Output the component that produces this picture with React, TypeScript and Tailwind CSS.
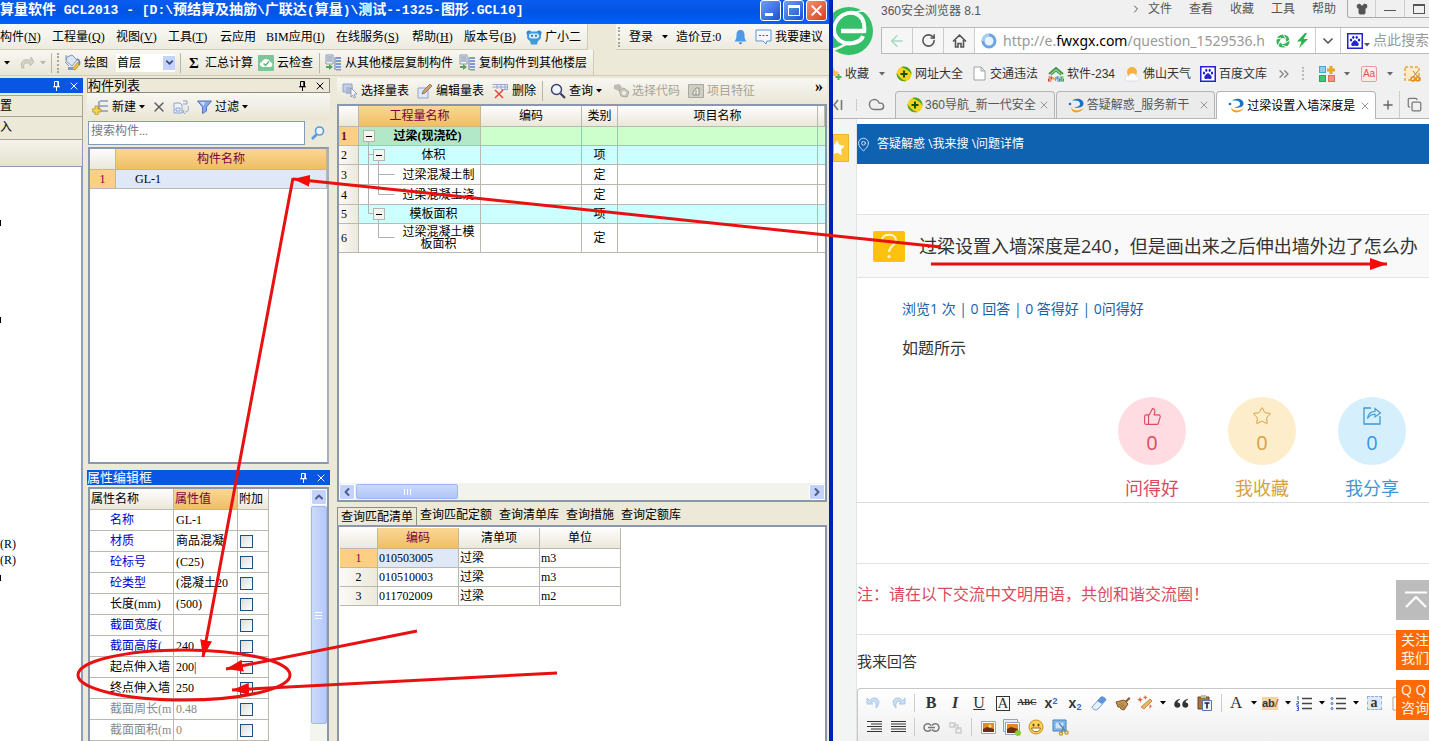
import React from "react";
import { ArrowLeft, ChevronDown, ChevronLeft, ChevronRight, ChevronsRight, ChevronUp, Cloud, Copy, Home, MapPin, Plus, RotateCw, Shirt, Star, ThumbsUp, X } from "lucide-react";

type IconProps = { className?: string };

const Caret = ({ className = "text-black" }: IconProps) => (
  <svg width="6" height="4" viewBox="0 0 6 4" className={`shrink-0 ${className}`}>
    <path d="M0 0h6L3 3.5z" fill="currentColor" />
  </svg>
);

const Pin = () => (
  <svg width="9" height="10" viewBox="0 0 9 10">
    <path d="M2.5 0.5h4v5h-4z M1 5.8h7 M4.5 6v4 M5.8 1v4.5" fill="none" stroke="currentColor" />
  </svg>
);

const BucketIcon = () => (
  <svg width="17" height="17" viewBox="0 0 17 17">
    <path d="M3 3l5-2 5 5-5 6-6-5z" fill="#dbe5f3" stroke="#7f97b8" />
    <path d="M2 1v5M1 8l4 4" stroke="#7f97b8" fill="none" />
    <path d="M8 15l6-7 2 2-5 6z" fill="#f0c33c" stroke="#a98016" strokeWidth=".7" />
    <path d="M13 5c3 1 3 4 2 6" stroke="#5d7fc0" strokeWidth="1.6" fill="none" />
    <path d="M4 13h5v3H4z" fill="#8398c6" />
  </svg>
);

const CloudCheckIcon = () => (
  <svg width="16" height="16" viewBox="0 0 16 16">
    <rect width="16" height="16" rx="1" fill="#7cc79a" />
    <path d="M3 11c-2-1-1-4 1-4 1-4 7-4 8 0 3 0 3 4 1 5H4z" fill="#fff" />
    <path d="M5.5 8.5l2 2 3.5-4" stroke="#5bb280" strokeWidth="1.4" fill="none" />
  </svg>
);

const FloorCopyIcon = () => (
  <svg width="17" height="17" viewBox="0 0 17 17">
    <path d="M1 1h7v9H1z" fill="#f4f6fa" stroke="#8d97a8" />
    <path d="M2 3h5M2 5h5M2 7h5" stroke="#6c7fa6" />
    <path d="M1 12h3v-2l4 3-4 3v-2H1z" fill="#54a457" />
    <path d="M11 3h5v2h-5zM11 6h5v2h-5zM11 9h5v2h-5zM11 12h5v2h-5zM11 15h5v1.5h-5z" fill="#7f9ad2" />
    <path d="M10 3v13" stroke="#5b77b3" />
  </svg>
);

const MascotIcon = () => (
  <svg width="16" height="16" viewBox="0 0 16 16">
    <circle cx="3" cy="4" r="2.5" fill="#2f86c9" />
    <circle cx="13" cy="4" r="2.5" fill="#2f86c9" />
    <rect x="1" y="2.500" width="14" height="10" rx="5" fill="#3f9bdc" />
    <rect x="3" y="4.500" width="10" height="5" rx="2.500" fill="#d4eefb" />
    <circle cx="6" cy="6.800" r="1" fill="#1d5f9d" />
    <circle cx="10" cy="6.800" r="1" fill="#1d5f9d" />
    <path d="M4 12h8l-1 3.500H5z" fill="#3f9bdc" />
  </svg>
);

const BellIcon = () => (
  <svg width="13" height="16" viewBox="0 0 13 16">
    <path d="M6.500 1c3 0 4 2 4 5 0 4 1 5 2 6.500H.5C1.500 11 2.500 10 2.500 6c0-3 1-5 4-5z" fill="#4d9be8" />
    <path d="M4.500 13.500h4l-2 2z" fill="#2e6fb5" />
  </svg>
);

const BubbleIcon = () => (
  <svg width="17" height="16" viewBox="0 0 17 16">
    <path d="M1 1h15v11h-4l-1 3-3-3H1z" fill="#f5f9ff" stroke="#5d95d6" />
    <path d="M4 6.500h2M7.500 6.500h2M11 6.500h2" stroke="#3465a8" strokeWidth="1.200" />
  </svg>
);

const NewIcon = () => (
  <svg width="17" height="16" viewBox="0 0 17 16">
    <path d="M8 2h8M8 7h8M8 12h8M7 2v10" stroke="#8a9ab8" strokeWidth="1.600" fill="none" />
    <path d="M3 7h3v3h3v3H6v3H3v-3H0v-3h3z" fill="#f6d64c" stroke="#a78b26" strokeWidth=".7" />
  </svg>
);

const CopyPropIcon = () => (
  <svg width="17" height="16" viewBox="0 0 17 16">
    <path d="M1 4h6l2 2v8H1z" fill="#eef2fb" stroke="#8ca0cf" />
    <path d="M3 9h4v3H3z" fill="none" stroke="#8ca0cf" />
    <path d="M10 2h4v3h-4M12 13c3 0 4-2 3-6M11 11l-1 2 2 2" stroke="#8ca0cf" fill="none" />
  </svg>
);

const FunnelIcon = () => (
  <svg width="15" height="14" viewBox="0 0 15 14">
    <path d="M.5 1h14l-5 6v4l-4 2.500V7z" fill="#86a9e6" stroke="#5278bd" />
    <path d="M3 2h5L6.500 6z" fill="#cfe0fa" />
  </svg>
);

const SearchIcon = ({ className = "text-[#3c3c66]" }: IconProps) => (
  <svg width="16" height="16" viewBox="0 0 16 16" className={className}>
    <circle cx="6.500" cy="6.500" r="5" fill="#eef6ff" stroke="currentColor" strokeWidth="1.400" />
    <path d="M10.500 10.500l4.500 4.500" stroke="currentColor" strokeWidth="2.200" />
  </svg>
);

const FindIcon = () => (
  <svg width="16" height="16" viewBox="0 0 16 16">
    <circle cx="9.500" cy="6" r="4" fill="#e9f5ff" stroke="#5a9bdc" strokeWidth="1.600" />
    <path d="M6.500 9.500L2 14" stroke="#5a9bdc" strokeWidth="2.600" />
  </svg>
);

const PickIcon = () => (
  <svg width="16" height="16" viewBox="0 0 16 16">
    <path d="M1 1h9v8H1z" fill="#c3cfe4" stroke="#93a4c6" />
    <path d="M4 4h7v7H4z" fill="#a9b9d8" />
    <path d="M9 5l6 6-3 .3 1.500 3-1.500.7-1.400-3L9 14z" fill="#fff" stroke="#7e8aa3" strokeWidth=".8" />
  </svg>
);

const EditIcon = () => (
  <svg width="16" height="16" viewBox="0 0 16 16">
    <path d="M1 5h10v10H1z" fill="#dfe9f7" stroke="#90a5c9" />
    <path d="M5 11l1-3 7-7 2 2-7 7z" fill="#c9a27a" stroke="#7d6244" strokeWidth=".7" />
  </svg>
);

const DeleteRowIcon = () => (
  <svg width="17" height="16" viewBox="0 0 17 16">
    <path d="M.5 1.500h15v5H9M.5 4h15M5 1.500V6M9 1.500V6M13 1.500V6" fill="none" stroke="#94a6ca" />
    <path d="M3 7l8 8M11 7l-8 8" stroke="#e5473e" strokeWidth="1.500" />
  </svg>
);

const GrayCodeIcon = () => (
  <svg width="16" height="16" viewBox="0 0 16 16">
    <path d="M1 2l5-1 3 3-3 4-5-2z" fill="#bdbcb2" />
    <path d="M6 7l5-2 5 4-2 5-6-1z" fill="#c9c8be" stroke="#a9a89e" />
    <circle cx="11" cy="10" r="2" fill="#f0efe9" />
  </svg>
);

const GrayFeatureIcon = () => (
  <svg width="16" height="14" viewBox="0 0 16 14">
    <path d="M.5.5h15v13H.5z" fill="#cfcec5" stroke="#a9a89e" />
    <path d="M5 11V8l3-4h3v7zM8 6v5" fill="#eceae2" stroke="#908f86" />
  </svg>
);

const Sep = ({ className = "h-5" }: IconProps) => <span className={`w-px shrink-0 bg-[#b9b6a2] ${className}`} />;

const Grip = () => <span className="h-5 w-0 shrink-0 border-l-2 border-dotted border-[#a9a693]" />;

type ToolProps = { className: string; icon?: React.ReactNode; label?: string; caret?: boolean; title?: string; disabled?: boolean };

const Tool = ({ className, icon, label, caret, title, disabled }: ToolProps) => (
  <button
    type="button"
    disabled={disabled}
    aria-label={label ?? title}
    className={`flex h-full shrink-0 items-center gap-[3px] whitespace-nowrap ${disabled ? "text-[#a6a496]" : ""} ${className}`}
  >
    {icon}
    {label}
    {caret && <Caret />}
  </button>
);

const titleParts: { text: string; wide: boolean }[] = [
  { text: "算量软件", wide: true },
  { text: " GCL2013 - [D:\\", wide: false },
  { text: "预结算及抽筋", wide: true },
  { text: "\\", wide: false },
  { text: "广联达", wide: true },
  { text: "(", wide: false },
  { text: "算量", wide: true },
  { text: ")\\", wide: false },
  { text: "测试", wide: true },
  { text: "--1325-", wide: false },
  { text: "图形", wide: true },
  { text: ".GCL10]", wide: false },
];

const TitleBar = () => (
  <header className="flex h-6 shrink-0 items-start justify-between bg-gradient-to-b from-[#0a5cf0] via-[#0054e3] to-[#0062fb] pr-[2px]">
    <h1 className="overflow-hidden whitespace-pre font-['Liberation_Mono','Noto_Sans_CJK_SC',monospace] text-[13px] leading-[21px] font-bold text-white">
      {titleParts.map((p, i) => (
        <span key={i} className={p.wide ? "text-[14px]" : "text-[13px]"}>
          {p.text}
        </span>
      ))}
    </h1>
    <div className="flex gap-[2px]">
      <button type="button" aria-label="最小化" className="flex h-[21px] w-[21px] items-end rounded-[3px] border border-white bg-gradient-to-br from-[#6f9ff5] to-[#1a4fd0] p-1">
        <span className="h-[3px] w-[8px] bg-white" />
      </button>
      <button type="button" aria-label="最大化" className="flex h-[21px] w-[21px] items-center justify-center rounded-[3px] border border-white bg-gradient-to-br from-[#6f9ff5] to-[#1a4fd0]">
        <span className="h-[11px] w-[12px] border border-t-[3px] border-white" />
      </button>
      <button type="button" aria-label="关闭" className="flex h-[21px] w-[21px] items-center justify-center rounded-[3px] border border-white bg-gradient-to-br from-[#f0906f] to-[#d43c14] text-white">
        <X size={17} strokeWidth={2.5} />
      </button>
    </div>
  </header>
);

const menus: { name: string; key?: string; width: string }[] = [
  { name: "构件", key: "N", width: "w-[52px]" },
  { name: "工程量", key: "Q", width: "w-[64px]" },
  { name: "视图", key: "V", width: "w-[52px]" },
  { name: "工具", key: "T", width: "w-[52px]" },
  { name: "云应用", width: "w-[46px]" },
  { name: "BIM应用", key: "I", width: "w-[70px]" },
  { name: "在线服务", key: "S", width: "w-[76px]" },
  { name: "帮助", key: "H", width: "w-[52px]" },
  { name: "版本号", key: "B", width: "w-[62px]" },
];

const MenuRow = () => (
  <div className="flex h-[26px] shrink-0 justify-between">
    <nav className="flex items-center border-r border-b border-[#cfccb9] bg-gradient-to-b from-[#fafaf7] to-[#edebdf] pr-[5px]">
      {menus.map((m) => (
        <button type="button" key={m.name} className={`shrink-0 text-left whitespace-nowrap ${m.width}`}>
          {m.name}
          {m.key && (
            <>
              (<u>{m.key}</u>)
            </>
          )}
        </button>
      ))}
      <Tool className="w-[56px]" icon={<MascotIcon />} label="广小二" />
    </nav>
    <div className="flex items-center border-b border-[#cfccb9] bg-gradient-to-b from-[#fafaf7] to-[#edebdf] pr-[6px] pl-[2px]">
      <Grip />
      <Tool className="w-[56px] justify-between pr-2 pl-[9px]" label="登录" caret />
      <span className="w-[58px] whitespace-nowrap">造价豆:0</span>
      <Tool className="w-[21px]" icon={<BellIcon />} title="通知" />
      <Tool className="w-[68px]" icon={<BubbleIcon />} label="我要建议" />
    </div>
  </div>
);

const MainToolbar = () => (
  <div className="flex h-[26px] shrink-0 border-b border-[#cfccb9]">
    <div className="flex items-center gap-[5px] border-r border-[#cfccb9] bg-gradient-to-b from-[#f8f7f2] to-[#e9e6d6] pr-[5px] pl-1">
      <Caret />
      <svg width="16" height="14" viewBox="0 0 16 14" className="ml-1">
        <path d="M3 12C1 6 4 3 9 4h3V1l3 5-4 4V7H8C5 7 4 9 5 12z" fill="#d6d4c8" stroke="#bfbdb0" />
      </svg>
      <Caret className="text-[#b9b7aa]" />
      <Sep />
      <Grip />
      <Tool className="w-[47px]" icon={<BucketIcon />} label="绘图" />
      <div className="relative w-[59px]">
        <select aria-label="楼层" className="h-[18px] w-full appearance-none bg-white pl-px leading-[18px]">
          <option>首层</option>
        </select>
        <span className="pointer-events-none absolute top-[2px] right-0 flex h-[14px] w-[12px] items-center justify-center bg-[#c3d3fd] text-[#3d5078]">
          <ChevronDown size={11} strokeWidth={4} />
        </span>
      </div>
      <Sep />
      <Tool className="w-[67px]" icon={<span className="w-[16px] text-center text-[15px] font-bold">Σ</span>} label="汇总计算" />
      <Tool className="w-[56px]" icon={<CloudCheckIcon />} label="云检查" />
      <Sep />
      <Tool className="w-[129px]" icon={<FloorCopyIcon />} label="从其他楼层复制构件" />
      <Tool className="w-[129px]" icon={<FloorCopyIcon />} label="复制构件到其他楼层" />
    </div>
  </div>
);

const PanelHeader = ({ title, active }: { title: string; active?: boolean }) => (
  <div className={`flex h-[15px] shrink-0 items-center justify-between pr-[3px] text-[13px] leading-[13px] ${active ? "bg-[#0a55e3] text-white" : "border border-[#8e8c7e] bg-[#ece9d8]"}`}>
    <h2>{title}</h2>
    <div className="flex items-center gap-[7px]">
      <button type="button" aria-label="固定">
        <Pin />
      </button>
      <button type="button" aria-label="关闭">
        <X size={12} strokeWidth={2} />
      </button>
    </div>
  </div>
);

const NavPanel = () => (
  <section className="flex w-[83px] shrink-0 flex-col">
    <PanelHeader title="" active />
    <div className="mt-[2px] h-[22px] border-t border-r border-b border-[#a9a793] leading-[20px]">置</div>
    <div className="h-[23px] border-r border-b border-[#a9a793] leading-[20px]">入</div>
    <div className="h-[27px] border-r border-b border-[#8e9ab5] bg-gradient-to-b from-[#f5f3ec] to-[#e4e1cf]" />
    <div className="flex grow flex-col border-r-2 border-[#8ba0c4] bg-white pt-[53px]">
      <span className="h-[6px] w-px bg-black" />
      <span className="mt-[91px] h-[6px] w-px bg-black" />
      <span className="mt-[213px] leading-4">(R)</span>
      <span className="leading-4">(R)</span>
      <span className="mt-[7px] h-[6px] w-px bg-black" />
    </div>
  </section>
);

const numHead = "border-r border-b border-[#b9b9b0] bg-gradient-to-b from-[#fdfdfb] to-[#ebe8da] font-normal";
const hotHead = "border-r border-b border-[#c9b78a] bg-gradient-to-b from-[#fbd794] to-[#f0be62] font-normal text-[#7a0042]";
const rowNum = "border-r border-b border-[#b9b9b0] bg-gradient-to-r from-[#fbfaf6] to-[#ece9dc] font-normal";
const hotNum = "border-r border-b border-[#b9b9b0] bg-[#fdcf85] text-[#7a0042]";
const cell = "border-r border-b border-[#b9b9b0]";

const ComponentList = () => (
  <section className="flex h-[386px] shrink-0 flex-col">
    <PanelHeader title="构件列表" />
    <div className="flex h-[27px] shrink-0 items-center bg-gradient-to-b from-[#f8f7f2] to-[#e9e6d6] pl-[5px]">
      <Tool className="w-[59px]" icon={<NewIcon />} label="新建" caret />
      <Tool className="w-[22px]" icon={<X size={16} strokeWidth={2} className="text-[#5c5c5c]" />} title="删除" />
      <Tool className="w-[24px]" icon={<CopyPropIcon />} title="复制" />
      <Tool className="w-[60px]" icon={<FunnelIcon />} label="过滤" caret />
    </div>
    <div className="flex h-[26px] shrink-0 items-start pt-px pl-px">
      <input aria-label="搜索构件" placeholder="搜索构件..." className="h-[24px] min-w-0 grow border border-[#7f9db9] bg-white px-[2px] pb-[4px] text-[12px] placeholder:text-[#777]" />
      <button type="button" aria-label="搜索" className="flex h-[24px] w-[25px] items-center justify-center">
        <FindIcon />
      </button>
    </div>
    <div className="mx-px mt-px grow border-2 border-[#8a97ad] border-r-[#a7b0c0] bg-white">
      <table className="w-full table-fixed border-separate border-spacing-0 leading-[14px]">
        <colgroup>
          <col className="w-[26px]" />
          <col />
        </colgroup>
        <thead>
          <tr className="h-[21px]">
            <th className={numHead} />
            <th className={hotHead}>构件名称</th>
          </tr>
        </thead>
        <tbody>
          <tr className="h-[19px]">
            <td className={`text-center ${hotNum}`}>1</td>
            <td className={`bg-[#dfe8f6] pl-[19px] ${cell}`}>GL-1</td>
          </tr>
        </tbody>
      </table>
    </div>
  </section>
);

type Prop = { name: string; value: string; check: boolean; tone: string };
const blue = "text-[#0000d0]";
const gray = "text-[#8a8a8a]";
const props: Prop[] = [
  { name: "名称", value: "GL-1", check: false, tone: blue },
  { name: "材质", value: "商品混凝", check: true, tone: blue },
  { name: "砼标号", value: "(C25)", check: true, tone: blue },
  { name: "砼类型", value: "(混凝土20", check: true, tone: blue },
  { name: "长度(mm)", value: "(500)", check: true, tone: "text-black" },
  { name: "截面宽度(", value: "", check: true, tone: blue },
  { name: "截面高度(", value: "240", check: true, tone: blue },
  { name: "起点伸入墙", value: "200|", check: true, tone: "text-black" },
  { name: "终点伸入墙", value: "250", check: true, tone: "text-black" },
  { name: "截面周长(m", value: "0.48", check: true, tone: gray },
  { name: "截面面积(m", value: "0", check: true, tone: gray },
];

const PropertyPanel = () => (
  <section className="mt-[6px] flex min-h-0 grow flex-col">
    <PanelHeader title="属性编辑框" active />
    <div className="mx-px mt-[2px] flex min-h-0 grow justify-between overflow-hidden border-x-2 border-t-2 border-[#8a97ad] bg-white">
      <table className="h-fit w-[179px] table-fixed border-separate border-spacing-0 leading-[14px]">
        <colgroup>
          <col className="w-[84px]" />
          <col className="w-[64px]" />
          <col className="w-[31px]" />
        </colgroup>
        <thead>
          <tr className="h-[21px] text-left">
            <th className={`pl-px ${numHead}`}>属性名称</th>
            <th className={`pl-px ${hotHead}`}>属性值</th>
            <th className={`pl-px whitespace-nowrap ${numHead}`}>附加</th>
          </tr>
        </thead>
        <tbody>
          {props.map((p) => (
            <tr key={p.name} className="h-[21px] whitespace-nowrap">
              <td className={`overflow-hidden pl-5 ${cell} ${p.tone}`}>{p.name}</td>
              <td className={`overflow-hidden pl-[2px] ${cell} ${p.tone === gray ? gray : ""}`}>{p.value}</td>
              <td className={`pl-[2px] ${cell}`}>
                {p.check && <input type="checkbox" aria-label={`附加 ${p.name}`} className="block size-[13px] appearance-none border border-[#1c5180] bg-gradient-to-br from-[#dcdcd7] to-white" />}
              </td>
            </tr>
          ))}
        </tbody>
      </table>
      <div className="flex w-[17px] flex-col items-center gap-px bg-[#f5f5f0]">
        <button type="button" aria-label="向上滚动" className="flex size-4 items-center justify-center rounded-[2px] border border-white bg-[#c3d3fd] text-[#4d6185]">
          <ChevronUp size={12} strokeWidth={4} />
        </button>
        <div className="flex h-[218px] w-4 flex-col items-center justify-center gap-[2px] rounded-[2px] border border-[#9eb8f0] bg-gradient-to-r from-[#cbdafd] to-[#b5c9fa]">
          <span className="h-px w-[7px] bg-white" />
          <span className="h-px w-[7px] bg-white" />
          <span className="h-px w-[7px] bg-white" />
        </div>
      </div>
    </div>
  </section>
);

type QRow = { n: number; level: number; name: string; kind: string; height: string; h: number; bg: string; last?: boolean };
const qRows: QRow[] = [
  { n: 1, level: 1, name: "过梁(现浇砼)", kind: "", height: "h-[19px]", h: 19, bg: "bg-[#ccffcc]" },
  { n: 2, level: 2, name: "体积", kind: "项", height: "h-[19px]", h: 19, bg: "bg-[#ccffff]" },
  { n: 3, level: 3, name: "过梁混凝土制", kind: "定", height: "h-[20px]", h: 20, bg: "bg-white" },
  { n: 4, level: 3, name: "过梁混凝土浇", kind: "定", height: "h-[20px]", h: 20, bg: "bg-white", last: true },
  { n: 5, level: 2, name: "模板面积", kind: "项", height: "h-[19px]", h: 19, bg: "bg-[#ccffff]", last: true },
  { n: 6, level: 3, name: "过梁混凝土模板面积", kind: "定", height: "h-[29px]", h: 29, bg: "bg-white", last: true },
];

const TreeMark = ({ row }: { row: QRow }) => {
  const mid = Math.floor(row.h / 2) - 1;
  const bottom = row.h - 1;
  const width = row.level === 1 ? 16 : row.level === 2 ? 28 : 38;
  const boxX = row.level === 1 ? 4.5 : 14.5;
  return (
    <svg width={width} height={bottom} className="shrink-0">
      <g stroke="#b0b0b0" fill="none">
        {row.level === 1 && <path d={`M9.500 ${mid}V${bottom}`} />}
        {row.level === 2 && <path d={`M9.500 0V${row.last ? mid + 0.5 : bottom}M9.500 ${mid + 0.5}h5M19.500 ${mid}V${bottom}`} />}
        {row.level === 3 && <path d={`M19.500 0V${row.last ? mid + 0.5 : bottom}M19.500 ${mid + 0.5}h16`} />}
        {row.level === 3 && row.n < 5 && <path d={`M9.500 0V${bottom}`} />}
      </g>
      {row.level < 3 && (
        <>
          <rect x={boxX} y={mid - 4.5} width="11" height="11" fill="#f6f4ee" stroke="#b5b5ad" />
          <path d={`M${boxX + 2.5} ${mid + 1.5}h6`} stroke="#000" />
        </>
      )}
    </svg>
  );
};

const QuantityTable = () => (
  <div className="flex h-[398px] shrink-0 flex-col border-2 border-[#8a97ad] bg-white">
    <table className="w-full table-fixed border-separate border-spacing-0 leading-[12px]">
      <colgroup>
        <col className="w-[20px]" />
        <col className="w-[122px]" />
        <col className="w-[101px]" />
        <col className="w-[36px]" />
        <col />
        <col className="w-[7px]" />
      </colgroup>
      <thead>
        <tr className="h-[21px]">
          <th className={numHead} />
          <th className={hotHead}>工程量名称</th>
          <th className={numHead}>编码</th>
          <th className={numHead}>类别</th>
          <th className={numHead}>项目名称</th>
          <th className={numHead} />
        </tr>
      </thead>
      <tbody>
        {qRows.map((r) => (
          <tr key={r.n} className={`${r.height} ${r.bg}`}>
            <td className={`pl-[2px] ${r.n === 1 ? `font-bold ${hotNum}` : rowNum}`}>{r.n}</td>
            <td className={`${cell} ${r.n === 1 ? "bg-[#b2e8c8] font-bold" : ""}`}>
              <div className="flex items-center overflow-hidden">
                <TreeMark row={r} />
                <span className="grow px-[4px] text-center">{r.name}</span>
              </div>
            </td>
            <td className={cell} />
            <td className={`text-center ${cell}`}>{r.kind}</td>
            <td className={cell} />
            <td className="border-b border-[#b9b9b0]" />
          </tr>
        ))}
      </tbody>
    </table>
    <div className="mt-auto flex h-[17px] shrink-0 items-center bg-[#f3f3ee]">
      <button type="button" aria-label="向左滚动" className="flex size-4 items-center justify-center rounded-[2px] border border-white bg-[#c3d3fd] text-[#4d6185]">
        <ChevronLeft size={12} strokeWidth={4} />
      </button>
      <div className="ml-px flex h-[15px] w-[102px] items-center justify-center gap-[2px] rounded-[2px] border border-[#9eb8f0] bg-gradient-to-b from-[#cbdafd] to-[#b0c6fa]">
        <span className="h-[6px] w-px bg-white" />
        <span className="h-[6px] w-px bg-white" />
        <span className="h-[6px] w-px bg-white" />
      </div>
      <button type="button" aria-label="向右滚动" className="ml-auto flex size-4 items-center justify-center rounded-[2px] border border-white bg-[#c3d3fd] text-[#4d6185]">
        <ChevronRight size={12} strokeWidth={4} />
      </button>
    </div>
  </div>
);

const matches = [
  ["010503005", "过梁", "m3"],
  ["010510003", "过梁", "m3"],
  ["011702009", "过梁", "m2"],
];

const QuantityArea = () => (
  <section className="flex min-w-0 grow flex-col">
    <div className="flex h-[26px] shrink-0 items-center bg-gradient-to-b from-[#f8f7f2] to-[#e9e6d6] pl-[5px]">
      <Tool className="w-[75px]" icon={<PickIcon />} label="选择量表" />
      <Tool className="w-[75px]" icon={<EditIcon />} label="编辑量表" />
      <Tool className="w-[50px]" icon={<DeleteRowIcon />} label="删除" />
      <Sep />
      <Tool className="w-[70px] pl-[7px]" icon={<SearchIcon />} label="查询" caret />
      <Tool className="w-[75px]" icon={<GrayCodeIcon />} label="选择代码" disabled />
      <Tool className="w-[75px]" icon={<GrayFeatureIcon />} label="项目特征" disabled />
      <button type="button" aria-label="更多" className="mr-1 ml-auto pb-2 text-[16px] leading-4 font-bold">
        »
      </button>
    </div>
    <QuantityTable />
    <div className="flex h-[25px] shrink-0 items-end gap-[7px] border-b-2 border-[#8a97ad] whitespace-nowrap">
      <button type="button" className="-mr-[4px] h-[18px] border border-b-0 border-[#8e8c7e] px-[3px] leading-[18px]">
        查询匹配清单
      </button>
      {["查询匹配定额", "查询清单库", "查询措施", "查询定额库"].map((t) => (
        <button type="button" key={t} className="h-[20px] leading-[18px]">
          {t}
        </button>
      ))}
    </div>
    <div className="min-h-0 grow border-x-2 border-[#8a97ad] bg-white pt-px pl-px">
      <table className="w-[281px] table-fixed border-separate border-spacing-0 leading-[14px]">
        <colgroup>
          <col className="w-[38px]" />
          <col className="w-[81px]" />
          <col className="w-[81px]" />
          <col className="w-[81px]" />
        </colgroup>
        <thead>
          <tr className="h-[21px]">
            <th className={numHead} />
            <th className={hotHead}>编码</th>
            <th className={numHead}>清单项</th>
            <th className={numHead}>单位</th>
          </tr>
        </thead>
        <tbody>
          {matches.map((m, i) => (
            <tr key={m[0]} className="h-[19px]">
              <td className={`text-center ${i === 0 ? hotNum : rowNum}`}>{i + 1}</td>
              <td className={`pl-px ${cell} ${i === 0 ? "bg-[#dfe8f6]" : ""}`}>{m[0]}</td>
              <td className={`pl-px ${cell}`}>{m[1]}</td>
              <td className={`pl-px ${cell}`}>{m[2]}</td>
            </tr>
          ))}
        </tbody>
      </table>
    </div>
  </section>
);

const DesktopApp = () => (
  <div className="flex min-w-0 flex-col overflow-hidden border-r-4 border-[#0022b4] bg-[#ece9d8] font-['Liberation_Serif','Noto_Sans_CJK_SC',serif] text-[12px] leading-[16px] text-black">
    <TitleBar />
    <MenuRow />
    <MainToolbar />
    <main className="flex min-h-0 grow pt-[2px] pr-[2px]">
      <NavPanel />
      <div className="ml-[4px] flex w-[243px] shrink-0 flex-col">
        <ComponentList />
        <PropertyPanel />
      </div>
      <div className="ml-[7px] flex min-w-0 grow">
        <QuantityArea />
      </div>
    </main>
  </div>
);

const BaiduIcon = () => (
  <svg width="16" height="16" viewBox="0 0 16 16" className="shrink-0">
    <rect x=".75" y=".75" width="14.500" height="14.500" fill="#fff" stroke="#2323d0" strokeWidth="1.500" />
    <g fill="#2323d0">
      <ellipse cx="4" cy="7" rx="1.200" ry="1.500" />
      <ellipse cx="6.300" cy="4.300" rx="1.100" ry="1.600" />
      <ellipse cx="9.700" cy="4.300" rx="1.100" ry="1.600" />
      <ellipse cx="12" cy="7" rx="1.200" ry="1.500" />
      <path d="M8 7.300c1.300 0 1.800 1.300 3 2.400 1.500 1.500.5 3.500-1.300 3.300-1.300-.3-2.100-.3-3.400 0-1.800.2-2.800-1.800-1.300-3.300C6.200 8.600 6.700 7.300 8 7.300z" />
    </g>
  </svg>
);

const NavPlusIcon = () => (
  <svg width="16" height="16" viewBox="0 0 16 16">
    <circle cx="8" cy="8" r="7.500" fill="#f8d21c" />
    <path d="M5 1C10-1 16 3 15.500 9 14 5 10 3 5 1zM.5 7c0 6 5 9 10 8C6 14 3 11 .5 7z" fill="#39a62f" />
    <path d="M8 4.500v7M4.500 8h7" stroke="#174f17" strokeWidth="2" />
  </svg>
);

const PageIcon = () => (
  <svg width="13" height="15" viewBox="0 0 13 15">
    <path d="M1 1h7l4 4v9H1zM8 1v4h4" fill="#fff" stroke="#a2a2a2" />
  </svg>
);

const HouseIcon = () => (
  <svg width="16" height="16" viewBox="0 0 16 16">
    <path d="M1 8l7-6 7 6" stroke="#3b9a41" strokeWidth="2" fill="none" />
    <path d="M3 9l5-4 5 4" stroke="#3b9a41" strokeWidth="1.200" fill="none" />
    <g fill="none" strokeWidth="1.200">
      <path d="M.5 11h3v2h-3v2h3" stroke="#d83a2e" />
      <path d="M5 11v2h2.500M7.500 11v4" stroke="#e2902a" />
      <path d="M11.500 11H9v2h2.500v2H9" stroke="#3f7bd0" />
      <path d="M15.500 11H13v4h2.500v-2H13" stroke="#39a041" />
    </g>
  </svg>
);

const WeatherIcon = () => (
  <svg width="16" height="16" viewBox="0 0 16 16">
    <circle cx="8" cy="6" r="5" fill="#fbb13c" />
    <path d="M2 15c-2-3 0-6 3-5 1-4 7-3 7 0 4 0 4 5 1 5z" fill="#fff" stroke="#cfd6dd" strokeWidth=".8" />
  </svg>
);

const SwirlIcon = () => (
  <svg width="17" height="15" viewBox="0 0 17 15">
    <path d="M4 3C8-1 16 1 15.500 6c-.5 4-6 4-9.500 3.500 3-.5 6-1 6-3.500C12 2.500 8 2 4 3z" fill="#1a73c4" />
    <path d="M3 9c2 5 9 4 13 1-3 5-12 7-13-1z" fill="#f59a23" />
    <circle cx="2" cy="6" r="1.300" fill="#1a73c4" />
  </svg>
);

const browserIcon = "flex h-full items-center justify-center";

const BrowserChrome = () => (
  <header className="shrink-0 bg-[#f0f0f0] text-[12px] text-[#333]">
    <div className="flex h-[60px]">
      <svg width="48" height="60" viewBox="0 0 48 60" className="shrink-0" aria-label="360">
        <circle cx="16" cy="31" r="24" fill="#34bf68" />
        <path d="M31 33C34 12 16 8 6 18 -6 32 6 46 20 43c6-1 9-4 10-7" fill="none" stroke="#fff" strokeWidth="4" />
        <path d="M8 31h23" stroke="#fff" strokeWidth="4.500" fill="none" />
        <path d="M8 31c1-8 14-12 17-3" stroke="#34bf68" strokeWidth="0" fill="none" />
        <path d="M-4 48C0 52 10 46 16 42" stroke="#fff" strokeWidth="2.500" fill="none" />
        <path d="M20 14c6-3 11-4 13-2" stroke="#fff" strokeWidth="2" fill="none" />
      </svg>
      <div className="flex min-w-0 grow flex-col">
        <div className="flex h-[27px] items-start text-[#555]">
          <h1 className="grow pt-[3px] text-[12px] leading-4 whitespace-nowrap">360安全浏览器 8.1</h1>
          <ChevronRight size={12} className="mt-[3px] mr-[6px]" />
          <nav className="flex gap-[17px] pr-[11px] leading-[18px] whitespace-nowrap">
            {["文件", "查看", "收藏", "工具", "帮助"].map((t) => (
              <button type="button" key={t}>
                {t}
              </button>
            ))}
          </nav>
          <div className="flex h-[18px] rounded-bl-[3px] border-b border-l border-[#aaa]">
            <button type="button" aria-label="皮肤" className={`w-[28px] border-r border-[#ccc] ${browserIcon}`}>
              <Shirt size={12} fill="#555" stroke="#555" />
            </button>
            <button type="button" aria-label="最小化" className={`w-[29px] border-r border-[#ccc] ${browserIcon}`}>
              <span className="mt-1 h-px w-3 bg-[#555]" />
            </button>
            <button type="button" aria-label="最大化" className="flex w-[24px] items-center pl-2">
              <span className="h-[10px] w-[12px] border border-t-2 border-[#555]" />
            </button>
          </div>
        </div>
        <div className="flex h-[27px] items-stretch border-y border-l border-[#b9b9b9] bg-white">
          <button type="button" aria-label="后退" className={`w-[31px] border-r border-[#ccc] bg-[#f6f6f6] text-[#a5dcc0] ${browserIcon}`}>
            <ArrowLeft size={18} />
          </button>
          <button type="button" aria-label="刷新" className={`w-[31px] border-r border-[#ccc] bg-[#f6f6f6] text-[#555] ${browserIcon}`}>
            <RotateCw size={15} strokeWidth={2.5} />
          </button>
          <button type="button" aria-label="主页" className={`w-[31px] border-r border-[#ccc] bg-[#f6f6f6] text-[#555] ${browserIcon}`}>
            <svg width="15" height="14" viewBox="0 0 15 14">
              <path d="M1 7.500L7.500 1.200 14 7.500M3.500 6v7H6V9.500h3V13h2.500V6" fill="none" stroke="currentColor" strokeWidth="1.600" />
            </svg>
          </button>
          <span className={`w-[26px] pl-px ${browserIcon}`}>
            <svg width="16" height="16" viewBox="0 0 16 16">
              <circle cx="8" cy="8" r="6" fill="#eaf4ff" stroke="#6ba7e4" strokeWidth="3" />
              <path d="M2 8a6 6 0 0 1 6-6" stroke="#a8d0f6" strokeWidth="3" fill="none" />
            </svg>
          </span>
          <div role="textbox" aria-label="地址" className="min-w-0 grow overflow-hidden pl-[2px] font-['Noto_Sans',sans-serif] text-[14px] leading-[25px] whitespace-nowrap text-[#999]">
            http://e.<span className="text-black">fwxgx.com</span>/question_1529536.h
          </div>
          <span className="flex w-[43px] shrink-0 items-center gap-[6px] pl-[4px]">
            <svg width="14" height="14" viewBox="0 0 14 14">
              <circle cx="7" cy="7" r="4.800" fill="none" stroke="#35b558" strokeWidth="3.600" />
              <path d="M7 0l3 5M14 6l-5 3M11 13l-5-2M2 12l2-5M0 5l5-1" stroke="#fff" strokeWidth="1" />
            </svg>
            <svg width="13" height="15" viewBox="0 0 13 15">
              <path d="M9 0L1 8.500h4.500L3 15l9-9H7.500L11 0z" fill="#28b34c" />
            </svg>
          </span>
          <button type="button" aria-label="地址列表" className={`w-[26px] shrink-0 border-x border-[#ccc] text-[#555] ${browserIcon}`}>
            <ChevronDown size={16} strokeWidth={2.5} />
          </button>
          <button type="button" aria-label="搜索引擎" className="flex shrink-0 items-center gap-px pl-[6px]">
            <BaiduIcon />
            <Caret className="mt-2 text-[#555]" />
          </button>
          <input aria-label="搜索" placeholder="点此搜索" className="w-[59px] shrink-0 pl-[3px] text-[14px] placeholder:text-[#999]" />
        </div>
      </div>
    </div>
    <div className="flex h-[27px] items-center whitespace-nowrap">
      <a href="#fav" className="flex w-[46px] shrink-0 items-center gap-[3px]">
        <svg width="9" height="15" viewBox="0 0 9 15">
          <path d="M0 1l2 4 4 1-3 4H0z" fill="#f5c344" />
          <path d="M5.500 8v6M2.500 11h6" stroke="#53b257" strokeWidth="2" />
        </svg>
        收藏
      </a>
      <span className="w-[17px] shrink-0">
        <Caret className="text-[#666]" />
      </span>
      <a href="#nav" className="flex w-[77px] shrink-0 items-center gap-[3px]">
        <NavPlusIcon />
        网址大全
      </a>
      <a href="#law" className="flex w-[75px] shrink-0 items-center gap-1">
        <PageIcon />
        交通违法
      </a>
      <a href="#soft" className="flex w-[76px] shrink-0 items-center gap-[3px]">
        <HouseIcon />
        软件-234
      </a>
      <a href="#weather" className="flex w-[76px] shrink-0 items-center gap-[3px]">
        <WeatherIcon />
        佛山天气
      </a>
      <a href="#wenku" className="flex w-[76px] shrink-0 items-center gap-[3px]">
        <BaiduIcon />
        百度文库
      </a>
      <button type="button" aria-label="更多书签" className="w-[24px] shrink-0 text-[#888]">
        <ChevronsRight size={16} />
      </button>
      <span className="ml-[2px] h-[13px] w-[17px] shrink-0 border-l-2 border-dotted border-[#bbb]" />
      <svg width="16" height="16" viewBox="0 0 16 16" className="shrink-0">
        <rect x=".5" y=".5" width="6" height="6" fill="#8ccdf2" stroke="#4ba3d8" />
        <path d="M12 0v8M8 4h8" stroke="#e7a521" strokeWidth="3" />
        <rect x=".5" y="9.500" width="6" height="6" fill="#48c27b" stroke="#2ba35d" />
        <rect x="9.500" y="9.500" width="6" height="6" fill="#f79180" stroke="#e46d5c" />
      </svg>
      <span className="w-[26px] shrink-0 pl-[9px]">
        <Caret className="text-[#666]" />
      </span>
      <span className="flex size-4 shrink-0 items-center justify-center rounded-[2px] border border-[#ec9b9b] bg-[#fdeaea] text-[10px] text-[#dc5454]">Aa</span>
      <span className="w-[27px] shrink-0 pl-[10px]">
        <Caret className="text-[#666]" />
      </span>
      <svg width="17" height="16" viewBox="0 0 17 16" className="shrink-0">
        <rect x="1" y="1" width="14" height="13" fill="#fdebc9" stroke="#eda43a" strokeWidth="1.500" strokeDasharray="3 2" />
        <circle cx="9" cy="13" r="2" fill="none" stroke="#e58b1e" strokeWidth="1.500" />
        <circle cx="14" cy="13" r="2" fill="none" stroke="#e58b1e" strokeWidth="1.500" />
        <path d="M9 11l5-6M14 11L9 5" stroke="#a9814b" />
      </svg>
    </div>
    <div className="flex h-[32px] items-end border-b border-[#b5b5b5] pt-1">
      <button type="button" aria-label="收起" className="mb-[7px] w-[24px] shrink-0 border-r border-[#ccc] text-[#777]">
        <svg width="10" height="12" viewBox="0 0 10 12" className="block">
          <path d="M5 1L1 6l4 5M8.500 1v10" fill="none" stroke="currentColor" strokeWidth="1.600" />
        </svg>
      </button>
      <span className="flex h-[27px] w-[38px] shrink-0 items-center justify-center text-[#777]">
        <Cloud size={17} />
      </span>
      {[
        { icon: <NavPlusIcon />, title: "360导航_新一代安全", active: false },
        { icon: <SwirlIcon />, title: "答疑解惑_服务新干", active: false },
        { icon: <SwirlIcon />, title: "过梁设置入墙深度是", active: true },
      ].map((t) => (
        <div
          key={t.title}
          className={`mr-px flex min-w-0 flex-1 items-center rounded-t-[4px] border border-b-0 border-[#b5b5b5] pr-1 pl-[11px] ${t.active ? "-mb-px h-[28px] bg-white text-black" : "h-[27px] bg-[#ebebeb] text-[#555]"}`}
        >
          <span className="shrink-0">{t.icon}</span>
          <button type="button" className="min-w-0 grow pl-[2px] text-left whitespace-nowrap">
            {t.title}
          </button>
          <button type="button" aria-label={`关闭 ${t.title}`} className="shrink-0 text-[#999]">
            <X size={12} />
          </button>
        </div>
      ))}
      <button type="button" aria-label="新标签页" className="flex h-[27px] w-[23px] shrink-0 items-center justify-center border-r border-[#ccc] text-[#666]">
        <Plus size={14} strokeWidth={2.5} />
      </button>
      <button type="button" aria-label="标签列表" className="flex h-[27px] w-[29px] shrink-0 items-center justify-center text-[#777]">
        <Copy size={15} />
      </button>
    </div>
  </header>
);

const ShareIcon = () => (
  <svg width="20" height="20" viewBox="0 0 20 20">
    <path d="M9 2H2v16h16v-8" fill="none" stroke="currentColor" strokeWidth="1.300" />
    <path d="M5.500 12.500C6 7.500 9 5.500 13 5.500V2.500l5.500 4.500-5.500 4V8.300C9.500 8.300 7.500 9.500 5.500 12.500z" fill="none" stroke="currentColor" strokeWidth="1.100" />
  </svg>
);

const Counter = ({ circle, tone, icon, label }: { circle: string; tone: string; icon: React.ReactNode; label: string }) => (
  <button type="button" className={`flex w-[68px] flex-col items-center ${tone}`}>
    <span className={`flex size-[68px] flex-col items-center rounded-full pt-[9px] ${circle}`}>
      <span className="flex h-5 items-center">{icon}</span>
      <span className="text-[20px] leading-[34px]">0</span>
    </span>
    <span className="mt-[10px] text-[18px] leading-[26px] whitespace-nowrap">{label}</span>
  </button>
);

const Arrow = ({ flip }: { flip?: boolean }) => (
  <svg width="16" height="14" viewBox="0 0 16 14" className={flip ? "-scale-x-100" : ""}>
    <path d="M1 2v6h6L5 6c3-2 6 0 5 6 5-5 3-10-2-10C6 2 5 3 3.500 4.500z" fill="#c9def3" stroke="#a9c8e8" />
  </svg>
);

const AlignLines = ({ right }: { right?: boolean }) => (
  <svg width="15" height="12" viewBox="0 0 15 12">
    <path d={right ? "M0 .5h15M4 3h11M0 5.500h15M4 8h11M0 10.500h15" : "M0 .5h15M0 3h15M0 5.500h15M0 8h15M0 10.500h15"} stroke="#333" />
  </svg>
);

const ListLines = ({ ordered }: { ordered?: boolean }) => (
  <svg width="16" height="15" viewBox="0 0 16 15">
    <path d="M6 2.500h10M6 7.500h10M6 12.500h10" stroke="#444" strokeWidth="1.300" />
    {ordered ? (
      <path d="M2 0v4M.5 5.500h2v2H.8v1.700h2M.5 10.500h2v4h-2M1 12.500h1.500" stroke="#3f62c4" fill="none" />
    ) : (
      <g fill="none" stroke="#3f62c4">
        <circle cx="2" cy="2.500" r="1" />
        <circle cx="2" cy="7.500" r="1" />
        <circle cx="2" cy="12.500" r="1" />
      </g>
    )}
  </svg>
);

const EdBtn = ({ title, children, menu }: { title: string; children: React.ReactNode; menu?: boolean }) => (
  <button type="button" aria-label={title} className={`flex h-6 shrink-0 items-center ${menu ? "w-[34px] justify-between pr-[3px] pl-[2px]" : "w-6 justify-center"}`}>
    {children}
    {menu && <Caret />}
  </button>
);

const EdSep = () => <span className="mx-1 h-[18px] w-px shrink-0 bg-[#ccc]" />;

const Editor = () => (
  <div className="grow rounded-tl-[4px] border-t border-l border-[#c4c8c8] bg-gradient-to-b from-white to-[#efefef] pt-[2px] pl-1 font-['Liberation_Serif',serif] text-[#333]">
    <div className="flex items-center">
      <EdBtn title="撤销"><Arrow /></EdBtn>
      <EdBtn title="重做"><Arrow flip /></EdBtn>
      <EdSep />
      <EdBtn title="加粗"><b className="text-[16px]">B</b></EdBtn>
      <EdBtn title="斜体"><i className="text-[16px] font-bold">I</i></EdBtn>
      <EdBtn title="下划线"><u className="text-[16px]">U</u></EdBtn>
      <EdBtn title="边框"><span className="border border-[#333] px-px text-[15px] leading-[13px]">A</span></EdBtn>
      <EdBtn title="删除线"><s className="text-[9px] font-bold">ABC</s></EdBtn>
      <EdBtn title="上标">
        <span className="font-['Liberation_Sans',sans-serif] text-[14px] leading-4 font-bold">x<sup className="text-[9px] text-[#3f62c4]">2</sup></span>
      </EdBtn>
      <EdBtn title="下标">
        <span className="font-['Liberation_Sans',sans-serif] text-[14px] leading-4 font-bold">x<sub className="text-[9px] text-[#3f62c4]">2</sub></span>
      </EdBtn>
      <EdBtn title="清除">
        <svg width="16" height="16" viewBox="0 0 16 16">
          <path d="M1 12L10 2c1-1 5 1 5 3L7 14c-2 2-6 0-6-2z" fill="#e8f1fb" stroke="#7d9ccc" />
          <path d="M6 6l4-4c1-1 5 1 5 3l-4 4z" fill="#5e94dc" />
        </svg>
      </EdBtn>
      <EdBtn title="格式刷">
        <svg width="16" height="15" viewBox="0 0 16 15">
          <path d="M1 6l8-2 4 4-4 6-3-1-1-2-2 0z" fill="#c59655" stroke="#7b5628" />
          <path d="M4 8l5 4M6 7l4 4" stroke="#8d6632" strokeWidth=".8" />
          <path d="M10 5l4-4 1.500 1.500-4 4z" fill="#8a5a28" />
        </svg>
      </EdBtn>
      <EdBtn title="自动排版" menu>
        <svg width="17" height="16" viewBox="0 0 17 16">
          <path d="M4 12l9-8 2 2-8 8z" fill="#f0b45f" stroke="#b97a2b" strokeWidth=".8" />
          <path d="M3 2l1 2 2 .5-2 1L3.500 8l-1-2.500L0 5l2-1zM8 0l.8 1.800L11 2l-2 1-.5 2-1-2-2-.8L7.500 2zM13 9l.7 1.500 2 .5-2 .7-.7 2-.7-2z" fill="#e45a33" />
        </svg>
      </EdBtn>
      <EdBtn title="引用">
        <svg width="15" height="9" viewBox="0 0 15 9">
          <path d="M5.500 0C2 1 0 3 .3 6c.3 3.500 6 3.500 6 .2C6.300 4 5 3.300 3.500 3.500 3.700 2 4.500 1.200 6 .8zM13.500 0C10 1 8 3 8.300 6c.3 3.500 6 3.500 6 .2C14.300 4 13 3.300 11.500 3.500c.2-1.500 1-2.300 2.500-2.700z" fill="#333" />
        </svg>
      </EdBtn>
      <EdBtn title="纯文本粘贴">
        <svg width="16" height="16" viewBox="0 0 16 16">
          <path d="M1 2h11v12H1z" fill="#a9713d" stroke="#6f4520" />
          <path d="M4 0h5v3H4z" fill="#bbb" />
          <path d="M5.500 5.500h9v10h-9z" fill="#eef4fc" stroke="#5677ad" />
          <path d="M7.500 8h5M10 8v5.500" stroke="#223" strokeWidth="1.600" />
        </svg>
      </EdBtn>
      <EdSep />
      <EdBtn title="字体颜色" menu><span className="pl-[2px] text-[17px]">A</span></EdBtn>
      <EdBtn title="背景色" menu>
        <span className="bg-[#f6d3a6] font-['Liberation_Sans',sans-serif] text-[11px] leading-[13px] font-bold">ab<i className="text-[#b5712a]">/</i></span>
      </EdBtn>
      <EdBtn title="有序列表" menu><ListLines ordered /></EdBtn>
      <EdBtn title="无序列表" menu><ListLines /></EdBtn>
      <EdBtn title="全选">
        <span className="border border-dashed border-[#8fb0e0] bg-[#dfe9f8] px-[3px] text-[14px] leading-[12px] font-bold">a</span>
      </EdBtn>
      <EdBtn title="清空"><PageIcon /></EdBtn>
    </div>
    <div className="flex items-center">
      <EdBtn title="右对齐"><AlignLines right /></EdBtn>
      <EdBtn title="两端对齐"><AlignLines /></EdBtn>
      <EdSep />
      <EdBtn title="链接">
        <svg width="17" height="9" viewBox="0 0 17 9">
          <path d="M8 2.500C6-.5 1 .5 1 4.500s5 5 7 2M9 2.500c2-3 7-2 7 2s-5 5-7 2M5 4.500h7" fill="none" stroke="#777" strokeWidth="1.400" />
        </svg>
      </EdBtn>
      <EdBtn title="取消链接">
        <svg width="15" height="15" viewBox="0 0 15 15">
          <path d="M7 3H2v4h5zM8 8h5v5H8zM5 5h5v5" fill="none" stroke="#ccc" strokeWidth="1.400" />
        </svg>
      </EdBtn>
      <EdSep />
      <EdBtn title="图片">
        <svg width="15" height="13" viewBox="0 0 15 13">
          <path d="M.5.5h14v12H.5z" fill="#fff" stroke="#b9a089" />
          <path d="M2 2h11v9H2z" fill="#e48a24" />
          <path d="M2 8l4-2 7 2v3H2z" fill="#6b2f12" />
          <circle cx="9" cy="5" r="1.500" fill="#ffe27a" />
        </svg>
      </EdBtn>
      <EdBtn title="多图上传">
        <svg width="18" height="17" viewBox="0 0 18 17">
          <path d="M.5.500h14v12H.5z" fill="#e9eef6" stroke="#90a3c4" />
          <path d="M2.500 3.500h14v12h-14z" fill="#fff" stroke="#90a3c4" />
          <path d="M4 5h11v9H4z" fill="#e48a24" />
          <path d="M4 10l4-2 7 2v4H4z" fill="#6b2f12" />
          <circle cx="15" cy="14" r="3" fill="#8dcb35" />
        </svg>
      </EdBtn>
      <EdBtn title="表情">
        <svg width="16" height="16" viewBox="0 0 16 16">
          <circle cx="8" cy="8" r="7" fill="#fcd355" stroke="#c98f1e" />
          <ellipse cx="5.500" cy="6" rx="1" ry="1.600" fill="#6a4310" />
          <ellipse cx="10.500" cy="6" rx="1" ry="1.600" fill="#6a4310" />
          <path d="M3.500 9h9c-1 5-8 5-9 0z" fill="#fff" stroke="#9c6414" />
        </svg>
      </EdBtn>
      <EdBtn title="截图">
        <svg width="17" height="17" viewBox="0 0 17 17">
          <path d="M1 1h13v11H1z" fill="#8dc3ee" stroke="#3e7dba" />
          <path d="M3 3h9v7H3z" fill="#cde6fa" stroke="#69a4d8" />
          <path d="M7 4l7 9M12 7l-3 7" stroke="#5b87b4" strokeWidth="1.300" />
          <circle cx="9" cy="14.500" r="1.600" fill="none" stroke="#c28f25" strokeWidth="1.200" />
          <circle cx="14.500" cy="13.500" r="1.600" fill="none" stroke="#c28f25" strokeWidth="1.200" />
        </svg>
      </EdBtn>
    </div>
  </div>
);

const QuestionPage = () => (
  <div className="relative flex min-h-0 grow bg-white pt-[5px] font-['Open_Sans','Noto_Sans_CJK_SC',sans-serif] text-[#333]">
    <aside className="-mt-[5px] w-6 shrink-0 border-r border-[#e2e4e4] bg-[#f3f5f5] pt-[15px]">
      <button type="button" aria-label="收藏夹" className="flex h-[28px] w-4 items-center overflow-hidden border border-[#e9b62a] bg-[#fcc93a] text-white">
        <Star size={18} fill="white" strokeWidth={0} className="-ml-[6px] shrink-0" />
      </button>
    </aside>
    <div className="flex min-w-0 grow flex-col">
      <nav className="flex h-10 shrink-0 items-center gap-[6px] bg-[#0f62b0] text-[12px] whitespace-nowrap text-white">
        <MapPin size={15} strokeWidth={1.5} className="-ml-px text-[#cfe2f5]" />
        <span>
          <a href="#answers">答疑解惑</a> \<a href="#ask">我来搜</a> \<a href="#detail">问题详情</a>
        </span>
      </nav>
      <div className="mt-[50px] flex h-16 shrink-0 items-center gap-[14px] overflow-hidden border-y border-[#e2e2e2] bg-[#f9f9f9] pl-4">
        <span className="flex h-[31px] w-[32px] shrink-0 items-center justify-center rounded-[2px] bg-[#fcc20f]">
          <svg width="18" height="26" viewBox="0 0 18 26">
            <path d="M2 7c0-7 14-7 14 0 0 5-7 6-7 12" fill="none" stroke="#fff6d8" strokeWidth="2" />
            <circle cx="9" cy="23.500" r="1.600" fill="#fff6d8" />
          </svg>
        </span>
        <h2 className="text-[18px] leading-6 whitespace-nowrap">过梁设置入墙深度是240，但是画出来之后伸出墙外边了怎么办</h2>
      </div>
      <p className="mt-[20px] pl-[45px] text-[14px] leading-[22px] whitespace-nowrap text-[#1761a8]">浏览1 次 | 0 回答 | 0 答得好 | 0问得好</p>
      <p className="mt-4 pl-[45px] text-[16px] leading-6">如题所示</p>
      <div className="mt-[37px] flex h-[106px] shrink-0 justify-end gap-[42px] border-b border-[#d9dde0] pr-[23px]">
        <Counter circle="bg-[#fedce1]" tone="text-[#dc4a62]" icon={<ThumbsUp size={19} strokeWidth={1.4} />} label="问得好" />
        <Counter circle="bg-[#feedcb]" tone="text-[#d9a03c]" icon={<Star size={20} strokeWidth={1.2} />} label="我收藏" />
        <Counter circle="bg-[#d6effd]" tone="text-[#3d97d3]" icon={<ShareIcon />} label="我分享" />
      </div>
      <div className="h-[61px] shrink-0 border-b border-[#e2e2e2]" />
      <p className="h-[71px] shrink-0 border-b border-[#e2e2e2] pt-[18px] text-[16px] leading-6 whitespace-nowrap text-[#dc4a5e]">注：请在以下交流中文明用语，共创和谐交流圈！</p>
      <h3 className="h-[53px] shrink-0 pt-[14px] text-[15px] leading-6">我来回答</h3>
      <Editor />
    </div>
    <div className="absolute right-0 bottom-[21px] flex w-[33px] flex-col gap-[10px] overflow-hidden text-[14px] leading-[18px] text-[#fff3e0]">
      <button type="button" aria-label="返回顶部" className="flex h-10 items-center bg-[#bcbcbc] pl-[9px]">
        <svg width="22" height="18" viewBox="0 0 22 18" className="shrink-0">
          <path d="M0 1.500h22M1 16L11 6l10 10" fill="none" stroke="#fff" strokeWidth="2.200" />
        </svg>
      </button>
      <a href="#follow" className="h-10 bg-[#ff6a05] pt-px pl-[5px] whitespace-nowrap">
        关注
        <br />
        我们
      </a>
      <a href="#qq" className="h-10 bg-[#ff6a05] pt-px pl-[5px] whitespace-nowrap">
        Q Q
        <br />
        咨询
      </a>
    </div>
  </div>
);

const strokes: [number, number, number, number][] = [
  [941, 247, 293, 179],
  [293, 178, 203, 657],
  [417, 631, 226, 669],
  [557, 673, 232, 690],
  [931, 264, 1387, 264],
];

const Annotations = () => (
  <svg width="1429" height="741" viewBox="0 0 1429 741" className="pointer-events-none absolute top-0 left-0" aria-hidden="true">
    <defs>
      <marker id="head" markerUnits="userSpaceOnUse" markerWidth="18" markerHeight="12" refX="17" refY="6" orient="auto">
        <path d="M0 0L17 6L0 12z" fill="#f50a0a" />
      </marker>
    </defs>
    <g stroke="#e81010" strokeWidth="3" fill="none">
      {strokes.map(([x1, y1, x2, y2]) => (
        <path key={`${x1}-${y1}`} d={`M${x1} ${y1}L${x2} ${y2}`} markerEnd="url(#head)" />
      ))}
      <ellipse cx="184" cy="675" rx="106" ry="25" />
    </g>
  </svg>
);

export default function App() {
  return (
    <div className="relative grid h-screen grid-cols-[833fr_596fr] overflow-hidden bg-white">
      <DesktopApp />
      <div className="flex min-w-0 flex-col overflow-hidden font-['Liberation_Sans','Noto_Sans_CJK_SC',sans-serif]">
        <BrowserChrome />
        <QuestionPage />
      </div>
      <Annotations />
    </div>
  );
}
